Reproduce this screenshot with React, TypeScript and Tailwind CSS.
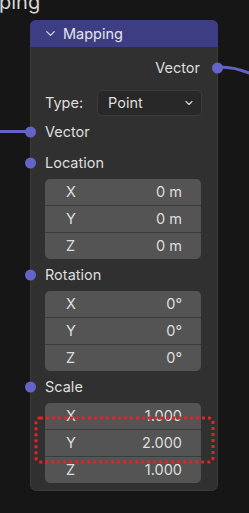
import { ChevronDown } from "lucide-react";

const rows = [
  { label: "Location", values: ["0 m", "0 m", "0 m"] },
  { label: "Rotation", values: ["0°", "0°", "0°"] },
  { label: "Scale", values: ["1.000", "2.000", "1.000"] },
];

function Socket({ side }: { side: "left" | "right" }) {
  return (
    <span
      className={
        side === "left"
          ? "absolute left-[-6px] top-1/2 h-[11px] w-[11px] -translate-y-1/2 rounded-full bg-[#6464c8]"
          : "absolute right-[-6px] top-1/2 h-[11px] w-[11px] -translate-y-1/2 rounded-full bg-[#6464c8]"
      }
    />
  );
}

function VectorBox({ values }: { values: string[] }) {
  return (
    <div className="mx-[14px] mr-[16px] overflow-hidden rounded-[5px] bg-[#545454]">
      {["X", "Y", "Z"].map((axis, i) => (
        <div
          key={axis}
          className={
            i > 0
              ? "flex h-[27px] items-center justify-between border-t border-[#3c3c3c] pl-[21px] pr-[19px]"
              : "flex h-[26px] items-center justify-between pl-[21px] pr-[19px]"
          }
        >
          <span>{axis}</span>
          <span>{values[i]}</span>
        </div>
      ))}
    </div>
  );
}

export default function App() {
  return (
    <div className="relative h-[513px] w-[249px] overflow-hidden bg-[#161616] font-['Inter',sans-serif] text-[14.5px] text-[#dedede]">
      <div className="absolute left-[-1px] top-[-8px] text-[20px] leading-[20px] text-[#d6d6d6]">ping</div>

      <svg className="absolute inset-0" width="249" height="513">
        <path d="M218 67 C232 67 238 69 252 74" stroke="#6363c6" strokeWidth="3" fill="none" />
        <path d="M-2 131.5 L30 131.5" stroke="#6363c6" strokeWidth="3" fill="none" />
      </svg>

      <div className="absolute left-[30px] top-[20px] w-[188px] rounded-[6px] border border-[#3a3a3a] bg-[#303030] pb-[7px]">
        <div className="-mx-px -mt-px flex h-[27px] items-center gap-[5px] rounded-t-[6px] bg-[#3d3d83] pl-[13px] text-[#e4e4ee]">
          <ChevronDown className="h-[15px] w-[15px]" strokeWidth={1.8} />
          <span>Mapping</span>
        </div>

        <div className="relative mt-[10px] flex h-[22px] items-center justify-end pr-[17px]">
          <span>Vector</span>
          <Socket side="right" />
        </div>

        <div className="mt-[11px] flex h-[26px] items-center pl-[14px] pr-[15px]">
          <span className="w-[52px]">Type:</span>
          <div className="flex h-[26px] flex-1 items-center justify-between rounded-[5px] border border-[#3c3c3c] bg-[#282828] pl-[10px] pr-[6px]">
            <span>Point</span>
            <ChevronDown className="h-[12px] w-[12px]" strokeWidth={2.2} />
          </div>
        </div>

        <div className="relative mt-[5px] flex h-[22px] items-center pl-[14px]">
          <Socket side="left" />
          <span>Vector</span>
        </div>

        {rows.map((row, idx) => (
          <div key={row.label}>
            <div className={idx === 0 ? "relative mt-[9px] flex h-[22px] items-center pl-[14px]" : "relative mt-[5px] flex h-[22px] items-center pl-[14px]"}>
              <Socket side="left" />
              <span>{row.label}</span>
            </div>
            <div className="mt-[5px]">
              <VectorBox values={row.values} />
            </div>
          </div>
        ))}
      </div>

      <svg className="absolute left-[34px] top-[416px]" width="181" height="48">
        <rect x="2" y="2" width="177" height="44" rx="4" fill="none" stroke="#e52222" strokeWidth="3" strokeDasharray="3 3" />
      </svg>
    </div>
  );
}
